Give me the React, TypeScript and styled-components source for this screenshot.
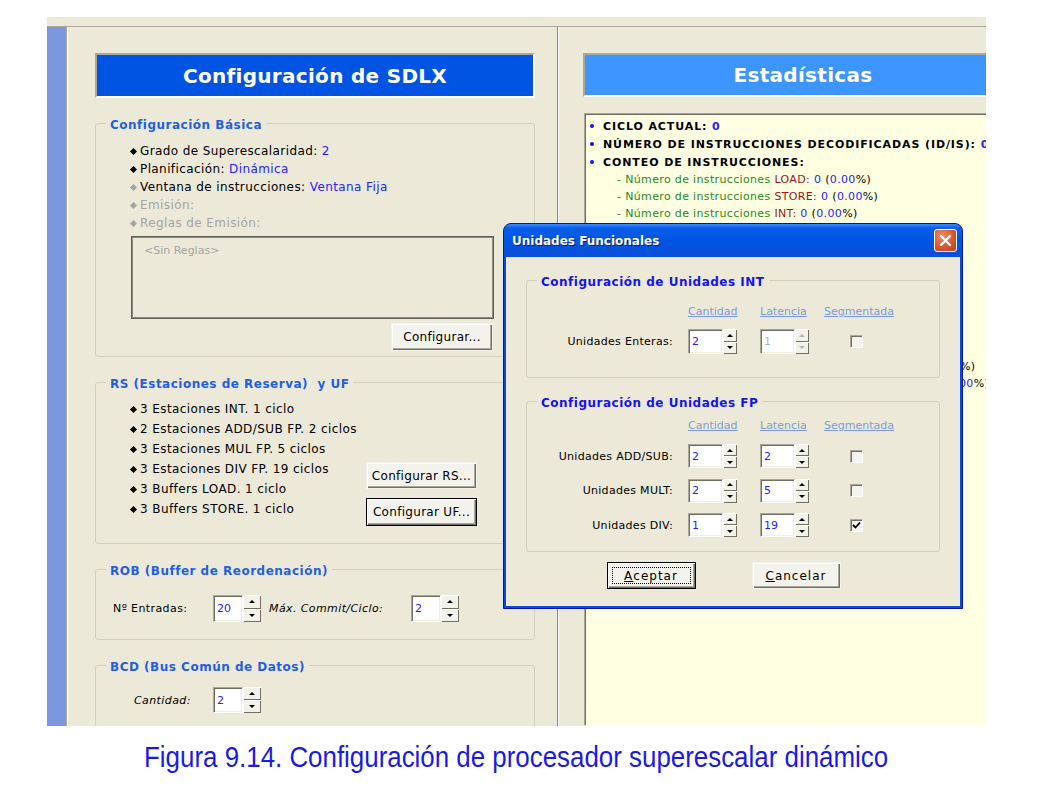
import React from 'react';
import styled, { createGlobalStyle } from 'styled-components';

const comic = `"Comic Sans MS", "DejaVu Sans", sans-serif`;
const beige = '#ece9d8';

const GlobalStyle = createGlobalStyle`
  html, body { margin: 0; padding: 0; background: #fff; }
  body { font-family: ${comic}; font-size: 11px; color: #000; }
  * { box-sizing: border-box; }
`;

const Page = styled.div`
  position: relative;
  width: 1057px;
  height: 789px;
  padding: 17px 0 0 47px;
  overflow: hidden;
`;

const Desktop = styled.div`
  width: 939px;
  height: 709px;
  background: ${beige};
  display: flex;
  flex-direction: column;
  overflow: hidden;
`;

const TopStrip = styled.div`
  flex: none;
  height: 10px;
  border-bottom: 1px solid #aca899;
`;

const Body = styled.div`
  flex: 1;
  min-height: 0;
  display: flex;
`;

const SideStrip = styled.div`
  flex: none;
  width: 19px;
  background: #7b97e0;
`;

const LeftPanel = styled.div`
  flex: none;
  width: 491px;
  border-left: 1px solid #aca899;
  box-shadow: inset 1px 0 #fff;
  padding: 26px 22px 0 28px;
  display: flex;
  flex-direction: column;
  gap: 16px;
`;

const RightPanel = styled.div`
  flex: none;
  width: 470px;
  border-left: 1px solid #8a8878;
  box-shadow: inset 1px 0 #fff;
  padding: 26px 0 0 25px;
  display: flex;
  flex-direction: column;
`;

const Banner = styled.div<{ $light?: boolean }>`
  flex: none;
  width: 440px;
  height: ${p => (p.$light ? 44 : 45)}px;
  background: ${p => (p.$light ? '#3d95ff' : '#0054e3')};
  border: 2px solid;
  border-color: #aca899 #fff #fff #aca899;
  color: #fff;
  font: bold 20px ${comic};
  letter-spacing: 0.3px;
  display: flex;
  align-items: center;
  justify-content: center;
`;

const Group = styled.fieldset<{ $pt: number; $pb: number }>`
  margin: 0;
  min-width: 0;
  flex: none;
  border: 1px solid #d0d0bf;
  border-radius: 3px;
  padding: ${p => p.$pt}px 0 ${p => p.$pb}px 0;
`;

const Legend = styled.legend<{ $color?: string }>`
  margin-left: 10px;
  padding: 4px 4px 0;
  font: bold 12px/14px ${comic};
  letter-spacing: 0.5px;
  color: ${p => p.$color ?? '#1e5fe6'};
`;

const ItemList = styled.ul<{ $pb?: number }>`
  list-style: none;
  margin: 0;
  padding: 0 0 ${p => p.$pb ?? 0}px 35px;
`;

const Item = styled.li<{ $h: number; $muted?: boolean }>`
  display: flex;
  align-items: center;
  height: ${p => p.$h}px;
  white-space: nowrap;
  font-size: 12px;
  letter-spacing: 0.4px;
  color: ${p => (p.$muted ? '#a4a4a4' : '#000')};
`;

const Diamond = styled.span<{ $muted?: boolean }>`
  flex: none;
  width: 9px;
  display: flex;
  align-items: center;
  &::before {
    content: '';
    width: 5px;
    height: 5px;
    background: ${p => (p.$muted ? '#a4a4a4' : '#000')};
    transform: rotate(45deg);
  }
`;

const Value = styled.span`
  color: #2424ff;
`;

const RulesArea = styled.div`
  margin: 4px 0 0 35px;
  width: 363px;
  display: flex;
  flex-direction: column;
  align-items: flex-end;
  gap: 4px;
`;

const RulesBox = styled.div`
  width: 100%;
  height: 83px;
  border: 1px solid #5f5e55;
  box-shadow: inset 1px 1px #8d8b80, inset -1px -1px #8d8b80;
  padding: 6px 0 0 12px;
  color: #a4a4a4;
  line-height: 16px;
`;

const Button = styled.button<{ $w: number; $h: number; $default?: boolean; $wide?: boolean }>`
  flex: none;
  width: ${p => p.$w}px;
  height: ${p => p.$h}px;
  margin-right: 1px;
  padding: 0;
  font: 12px ${comic};
  letter-spacing: ${p => (p.$wide ? 1 : 0.3)}px;
  color: #000;
  background: #f3f2ec;
  border: 1px solid ${p => (p.$default ? '#000' : '#f3f2ec')};
  box-shadow: inset 1px 1px #fff, inset -1px -1px #716f64, inset -2px -2px #aca899;
  display: flex;
  align-items: center;
  justify-content: center;
`;

const FocusRing = styled.span`
  width: calc(100% - 8px);
  height: calc(100% - 8px);
  border: 1px dotted #000;
  display: flex;
  align-items: center;
  justify-content: center;
`;

const RsRow = styled.div`
  display: flex;
  align-items: flex-end;
`;

const RsList = styled(ItemList)`
  width: 270px;
`;

const ButtonStack = styled.div`
  display: flex;
  flex-direction: column;
  gap: 9px;
`;

const FieldRow = styled.div<{ $pl: number }>`
  display: flex;
  align-items: center;
  padding-left: ${p => p.$pl}px;
`;

const FieldLabel = styled.span<{ $w: number; $italic?: boolean }>`
  flex: none;
  width: ${p => p.$w}px;
  font-style: ${p => (p.$italic ? 'italic' : 'normal')};
  letter-spacing: 0.4px;
  white-space: nowrap;
`;

const SpinBox = styled.div<{ $h: number; $gap?: number }>`
  flex: none;
  display: inline-flex;
  height: ${p => p.$h}px;
  margin-right: ${p => p.$gap ?? 0}px;
`;

const SpinField = styled.div<{ $w: number; $disabled?: boolean }>`
  width: ${p => p.$w}px;
  height: 100%;
  background: #fff;
  border: 1px solid;
  border-color: #aca899 #fff #fff #aca899;
  box-shadow: inset 1px 1px #716f64, inset -1px -1px #f1efe2;
  color: ${p => (p.$disabled ? '#b4b4b4' : '#2424ff')};
  padding-left: 3px;
  display: flex;
  align-items: center;
`;

const SpinButtons = styled.div<{ $w: number }>`
  width: ${p => p.$w}px;
  height: 100%;
  display: flex;
  flex-direction: column;
`;

const SpinArrow = styled.div<{ $up?: boolean; $disabled?: boolean }>`
  flex: 1;
  background: #f2f1ea;
  box-shadow: inset 1px 1px #fff, inset -1px -1px #716f64;
  display: flex;
  align-items: center;
  justify-content: center;
  &::before {
    content: '';
    border-left: 3px solid transparent;
    border-right: 3px solid transparent;
    ${p => (p.$up ? 'border-bottom' : 'border-top')}: 3px solid ${p => (p.$disabled ? '#b4b4b4' : '#000')};
  }
`;

type SpinProps = { value: string; h: number; fw: number; bw: number; disabled?: boolean; gap?: number };

function Spinner({ value, h, fw, bw, disabled, gap }: SpinProps) {
  return (
    <SpinBox $h={h} $gap={gap}>
      <SpinField $w={fw} $disabled={disabled}>{value}</SpinField>
      <SpinButtons $w={bw}>
        <SpinArrow $up $disabled={disabled} />
        <SpinArrow $disabled={disabled} />
      </SpinButtons>
    </SpinBox>
  );
}

const StatsBox = styled.div`
  flex: 1;
  margin: 16px 0 0 1px;
  background: #ffffe1;
  border: 1px solid;
  border-color: #aca899 #fff #fff #aca899;
  box-shadow: inset 1px 1px #716f64;
  padding: 3px 0 0 4px;
  white-space: nowrap;
  overflow: hidden;
`;

const StatHead = styled.div`
  display: flex;
  align-items: center;
  height: 18px;
  font: bold 11px ${comic};
  letter-spacing: 0.9px;
`;

const StatDot = styled.span`
  flex: none;
  width: 14px;
  display: flex;
  &::before {
    content: '';
    width: 4px;
    height: 4px;
    margin-left: 1px;
    border-radius: 50%;
    background: #1010ff;
  }
`;

const StatSub = styled.div`
  height: 17px;
  line-height: 17px;
  padding-left: 28px;
  letter-spacing: 0.35px;
`;

const Tone = styled.span<{ $c: string }>`
  color: ${p => p.$c};
`;

const Dialog = styled.div`
  position: absolute;
  left: 503px;
  top: 223px;
  width: 460px;
  height: 386px;
  display: flex;
  flex-direction: column;
  background: #0a48dc;
  border: 1px solid #0019a0;
  border-radius: 8px 8px 0 0;
  padding: 0 2px 2px;
`;

const TitleBar = styled.div`
  flex: none;
  height: 33px;
  margin: 0 -2px;
  border-radius: 7px 7px 0 0;
  background: linear-gradient(#3d8bff 0, #0a5fe9 4px, #0054e3 50%, #0a4ed6 100%);
  display: flex;
  align-items: center;
  justify-content: space-between;
  padding: 0 5px 0 8px;
`;

const TitleText = styled.span`
  color: #fff;
  font: bold 12px "Tahoma", "DejaVu Sans", sans-serif;
  text-shadow: 1px 1px #0a1e80;
`;

const CloseBox = styled.span`
  width: 23px;
  height: 23px;
  border: 1px solid #fff;
  border-radius: 3px;
  background: radial-gradient(circle at 35% 30%, #f08a6a, #d8532c 60%, #c03c18);
  display: flex;
  align-items: center;
  justify-content: center;
`;

const Client = styled.div`
  flex: 1;
  background: ${beige};
  padding: 14px 20px 0;
  display: flex;
  flex-direction: column;
  gap: 14px;
`;

const UnitGrid = styled.div<{ $gap: number }>`
  display: grid;
  grid-template-columns: 161px 72px 64px 70px;
  row-gap: ${p => p.$gap}px;
  align-items: center;
`;

const HeadGrid = styled(UnitGrid)<{ $mb: number }>`
  margin-bottom: ${p => p.$mb}px;
`;

const ColHead = styled.span`
  height: 18px;
  line-height: 18px;
  color: #7c9be0;
  text-decoration: underline;
`;

const RowLabel = styled.span`
  text-align: right;
  padding-right: 15px;
  letter-spacing: 0.3px;
  white-space: nowrap;
`;

const CheckBox = styled.span`
  justify-self: start;
  margin-left: 26px;
  width: 13px;
  height: 13px;
  border: 1px solid;
  border-color: #aca899 #fff #fff #aca899;
  box-shadow: inset 1px 1px #716f64;
  background: #f4f3ee;
  display: flex;
  align-items: center;
  justify-content: center;
`;

const DialogButtons = styled.div`
  display: flex;
  justify-content: center;
  gap: 55px;
  margin-top: -4px;
  padding-right: 18px;
`;

const Caption = styled.div`
  width: 939px;
  margin-top: 15px;
  text-align: center;
  font-family: "Liberation Sans Narrow", "Arial Narrow", "Liberation Sans", sans-serif;
  font-size: 30px;
  line-height: 32px;
  color: #1a1ae6;
  white-space: nowrap;
`;

const CaptionText = styled.span`
  display: inline-block;
  transform: scaleX(0.863);
`;

type Seg = [string, string];
const G = '#1e8c1e';
const R = '#a01414';
const B = '#2424ff';
const K = '#000';

const pct: Seg[] = [[' (', K], ['0.00', B], ['%)', K]];

const countLine = (kind: string): Seg[] => [
  ['- Número de instrucciones ', G],
  [kind + ':', R],
  [' 0', B],
  ...pct,
];

const stats: ({ head: string; value?: boolean } | { sub: Seg[] })[] = [
  { head: 'CICLO ACTUAL', value: true },
  { head: 'NÚMERO DE INSTRUCCIONES DECODIFICADAS (ID/IS)', value: true },
  { head: 'CONTEO DE INSTRUCCIONES' },
  { sub: countLine('LOAD') },
  { sub: countLine('STORE') },
  { sub: countLine('INT') },
  { sub: countLine('FP') },
  { sub: countLine('BRANCH') },
  { sub: [['- Saltos tomados: ', G], ['0', B], ...pct] },
  { sub: [['- Saltos no tomados: ', G], ['0', B], ...pct] },
  { sub: [['- Instrucciones emitidas: ', G], ['0', B]] },
  { sub: [['- Instrucciones terminadas: ', G], ['0', B]] },
  { sub: [['- Instrucciones confirmadas: ', G], ['0', B]] },
  { sub: [['- Ciclos de parada: ', G], ['0', B]] },
  { sub: [['- Ciclos de parada por riesgos estructurales (ROB): ', G], ['0', B], ...pct] },
  { sub: [['- Ciclos de parada por dependencias de datos (RAW): ', G], ['0', B], ...pct] },
];

const basicItems = [
  { label: 'Grado de Superescalaridad: ', value: '2' },
  { label: 'Planificación: ', value: 'Dinámica' },
  { label: 'Ventana de instrucciones: ', value: 'Ventana Fija', dot: true },
  { label: 'Emisión:', muted: true },
  { label: 'Reglas de Emisión:', muted: true },
];

const rsItems = [
  '3 Estaciones INT. 1 ciclo',
  '2 Estaciones ADD/SUB FP. 2 ciclos',
  '3 Estaciones MUL FP. 5 ciclos',
  '3 Estaciones DIV FP. 19 ciclos',
  '3 Buffers LOAD. 1 ciclo',
  '3 Buffers STORE. 1 ciclo',
];

const fpUnits = [
  { label: 'Unidades ADD/SUB:', qty: '2', lat: '2', seg: false },
  { label: 'Unidades MULT:', qty: '2', lat: '5', seg: false },
  { label: 'Unidades DIV:', qty: '1', lat: '19', seg: true },
];

function Headers({ mb }: { mb: number }) {
  return (
    <HeadGrid $gap={0} $mb={mb}>
      <span />
      <ColHead>Cantidad</ColHead>
      <ColHead>Latencia</ColHead>
      <ColHead>Segmentada</ColHead>
    </HeadGrid>
  );
}

export default function App() {
  return (
    <Page>
      <GlobalStyle />
      <Desktop>
        <TopStrip />
        <Body>
          <SideStrip />
          <LeftPanel>
            <Banner>Configuración de SDLX</Banner>

            <Group $pt={10} $pb={5}>
              <Legend>Configuración Básica</Legend>
              <ItemList>
                {basicItems.map(it => (
                  <Item key={it.label} $h={18} $muted={it.muted}>
                    <Diamond $muted={it.muted || it.dot} />
                    <span>
                      {it.label}
                      {it.value && <Value>{it.value}</Value>}
                    </span>
                  </Item>
                ))}
              </ItemList>
              <RulesArea>
                <RulesBox>&lt;Sin Reglas&gt;</RulesBox>
                <Button $w={102} $h={28}>Configurar...</Button>
              </RulesArea>
            </Group>

            <Group $pt={8} $pb={17}>
              <Legend>RS (Estaciones de Reserva)&nbsp; y UF</Legend>
              <RsRow>
                <RsList $pb={7}>
                  {rsItems.map(t => (
                    <Item key={t} $h={20}>
                      <Diamond />
                      <span>{t}</span>
                    </Item>
                  ))}
                </RsList>
                <ButtonStack>
                  <Button $w={111} $h={27}>Configurar RS...</Button>
                  <Button $w={111} $h={28} $default>Configurar UF...</Button>
                </ButtonStack>
              </RsRow>
            </Group>

            <Group $pt={17} $pb={17}>
              <Legend>ROB (Buffer de Reordenación)</Legend>
              <FieldRow $pl={17}>
                <FieldLabel $w={100}>Nº Entradas:</FieldLabel>
                <Spinner value="20" h={27} fw={30} bw={18} gap={8} />
                <FieldLabel $w={142} $italic>Máx. Commit/Ciclo:</FieldLabel>
                <Spinner value="2" h={27} fw={30} bw={18} />
              </FieldRow>
            </Group>

            <Group $pt={13} $pb={14}>
              <Legend>BCD (Bus Común de Datos)</Legend>
              <FieldRow $pl={38}>
                <FieldLabel $w={79} $italic>Cantidad:</FieldLabel>
                <Spinner value="2" h={26} fw={30} bw={18} />
              </FieldRow>
            </Group>
          </LeftPanel>

          <RightPanel>
            <Banner $light>Estadísticas</Banner>
            <StatsBox>
              {stats.map((s, i) =>
                'head' in s ? (
                  <StatHead key={i}>
                    <StatDot />
                    {s.head}:{s.value && <Value>&nbsp;0</Value>}
                  </StatHead>
                ) : (
                  <StatSub key={i}>
                    {s.sub.map(([t, c], j) => (
                      <Tone key={j} $c={c}>{t}</Tone>
                    ))}
                  </StatSub>
                ),
              )}
            </StatsBox>
          </RightPanel>
        </Body>
      </Desktop>

      <Caption>
        <CaptionText>Figura 9.14. Configuración de procesador superescalar dinámico</CaptionText>
      </Caption>

      <Dialog>
        <TitleBar>
          <TitleText>Unidades Funcionales</TitleText>
          <CloseBox>
            <svg width="13" height="13" viewBox="0 0 13 13">
              <path d="M2 2 L11 11 M11 2 L2 11" stroke="#fff" strokeWidth="2.4" strokeLinecap="round" />
            </svg>
          </CloseBox>
        </TitleBar>
        <Client>
          <Group $pt={14} $pb={23}>
            <Legend $color="#1414f0">Configuración de Unidades INT</Legend>
            <Headers mb={8} />
            <UnitGrid $gap={0}>
              <RowLabel>Unidades Enteras:</RowLabel>
              <Spinner value="2" h={25} fw={35} bw={14} />
              <Spinner value="1" h={25} fw={35} bw={14} disabled />
              <CheckBox />
            </UnitGrid>
          </Group>

          <Group $pt={7} $pb={14}>
            <Legend $color="#1414f0">Configuración de Unidades FP</Legend>
            <Headers mb={9} />
            <UnitGrid $gap={10.5}>
              {fpUnits.map(u => (
                <React.Fragment key={u.label}>
                  <RowLabel>{u.label}</RowLabel>
                  <Spinner value={u.qty} h={24} fw={35} bw={14} />
                  <Spinner value={u.lat} h={24} fw={35} bw={14} />
                  <CheckBox>
                    {u.seg && (
                      <svg width="9" height="9" viewBox="0 0 9 9">
                        <path d="M1 4 L3.5 6.5 L8 1.5" stroke="#000" strokeWidth="1.8" fill="none" />
                      </svg>
                    )}
                  </CheckBox>
                </React.Fragment>
              ))}
            </UnitGrid>
          </Group>

          <DialogButtons>
            <Button $w={89} $h={27} $default $wide>
              <FocusRing>
                <u>A</u>ceptar
              </FocusRing>
            </Button>
            <Button $w={89} $h={27} $wide>
              <u>C</u>ancelar
            </Button>
          </DialogButtons>
        </Client>
      </Dialog>
    </Page>
  );
}
